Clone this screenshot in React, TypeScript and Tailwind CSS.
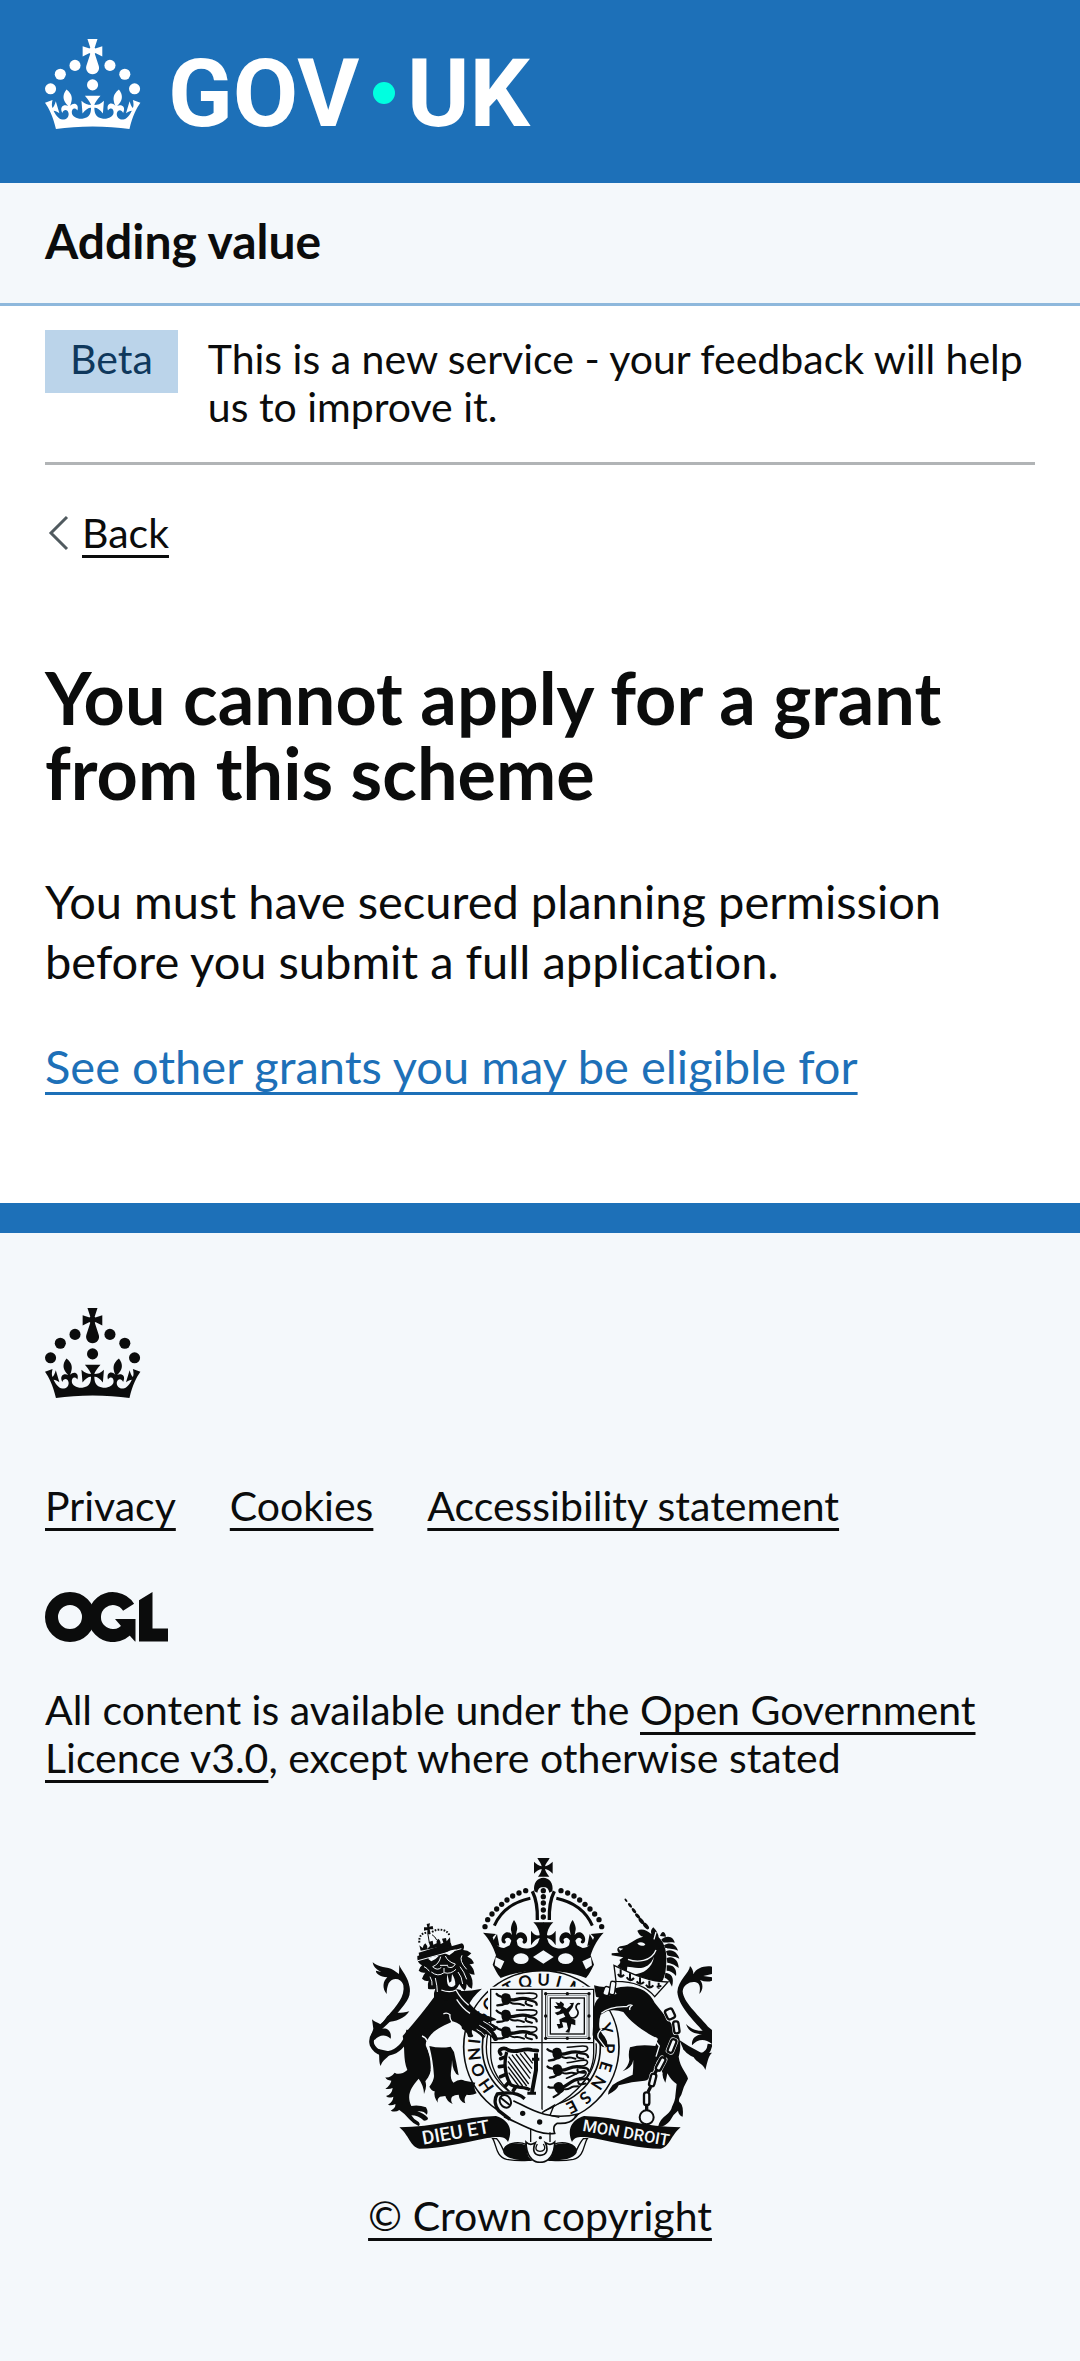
import type { ReactNode } from "react";

const INK = "#0b0c0c";
const PAPER = "#f4f8fb";

function CrownShapes() {
  return (
    <g>
      <circle cx="20" cy="17.6" r="3.7" />
      <circle cx="10.2" cy="23.5" r="3.7" />
      <circle cx="3.7" cy="33.2" r="3.7" />
      <circle cx="31.7" cy="30.6" r="3.7" />
      <circle cx="43.3" cy="17.6" r="3.7" />
      <circle cx="53.2" cy="23.5" r="3.7" />
      <circle cx="59.7" cy="33.2" r="3.7" />
      <path d="M33.1,9.8c.2-.1.3-.3.5-.5l4.6,2.4v-6.8l-4.6,1.5c-.1-.2-.3-.3-.5-.5l1.9-5.9h-6.7l1.9,5.9c-.2.1-.3.3-.5.5l-4.6-1.5v6.8l4.6-2.4c.1.2.3.3.5.5l-2.6,8c-.9,2.8,1.2,5.7,4.1,5.7h0c3,0,5.1-2.9,4.1-5.7l-2.6-8ZM37,37.9s-3.4,3.8-4.1,6.1c2.2,0,4.2-.5,6.4-2.8l-.7,8.5c-2-2.8-4.4-4.1-5.7-3.8.1,3.1.5,6.7,5.8,7.2,3.7.3,6.7-1.5,7-3.8.4-2.6-2-4.3-3.7-1.6-1.4-4.5,2.4-6.1,4.9-3.2-1.9-4.5-1.8-7.7,2.4-10.9,3,4,2.6,7.3-1.2,11.1,2.4-1.3,6.2,0,4,4.6-1.2-2.8-3.7-2.2-4.2.2-.3,1.7.7,3.7,3,4.2,1.9.3,4.7-.9,7-5.9-1.3,0-2.4.7-3.9,1.7l2.4-8c.6,2.3,1.4,3.7,2.2,4.5.6-1.6.5-2.8,0-5.3l5,1.8c-2.6,3.6-5.2,8.7-7.3,17.5-7.4-1.1-15.7-1.7-24.5-1.7h0c-8.8,0-17.1.6-24.5,1.7-2.1-8.9-4.7-13.9-7.3-17.5l5-1.8c-.5,2.5-.6,3.7,0,5.3.8-.8,1.6-2.3,2.2-4.5l2.4,8c-1.5-1-2.6-1.7-3.9-1.7,2.3,5,5.2,6.2,7,5.9,2.3-.4,3.3-2.4,3-4.2-.5-2.4-3-3.1-4.2-.2-2.2-4.6,1.6-6,4-4.6-3.7-3.7-4.2-7.1-1.2-11.1,4.2,3.2,4.3,6.4,2.4,10.9,2.5-2.8,6.3-1.3,4.9,3.2-1.8-2.7-4.1-1-3.7,1.6.3,2.3,3.3,4.1,7,3.8,5.4-.5,5.7-4.2,5.8-7.2-1.3-.2-3.7,1-5.7,3.8l-.7-8.5c2.2,2.3,4.2,2.7,6.4,2.8-.7-2.3-4.1-6.1-4.1-6.1h10.6,0Z" />
    </g>
  );
}

function GovUkLogo() {
  return (
    <svg viewBox="0 0 486 130" className="block h-[130px] w-[486px] max-w-full" role="img" aria-label="GOV.UK">
      <g fill="white" transform="scale(1.5)">
        <CrownShapes />
      </g>
      <g fill="white" fontFamily="Roboto, sans-serif" fontWeight="700" fontSize="95">
        <text x="123" y="87">GOV</text>
        <text x="362" y="87">UK</text>
      </g>
      <circle cx="339" cy="54" r="11" fill="#00ffe0" />
    </svg>
  );
}

function OglMark() {
  return (
    <svg viewBox="0 0 123 50" className="block h-[50px] w-[123px]" role="img" aria-label="Open Government Licence">
      <circle cx="25" cy="25" r="18.5" fill="none" stroke={INK} strokeWidth="13" />
      <path d="M83.6 15.2A18.5 18.5 0 1 0 82.5 36.5" fill="none" stroke={INK} strokeWidth="13" />
      <path d="M70 27H90.500V49.500H90L76 34Z" fill={INK} />
      <path d="M94 8.200L107.500 0V36.500H123V49.500H94Z" fill={INK} />
    </svg>
  );
}

const PEARLS = [
  [405, 260], [413, 239], [426, 222], [440, 207], [455, 193], [471, 180], [488, 168], [507, 159], [527, 152],
];

function ArmsCrownHalf() {
  return (
    <g>
      {PEARLS.map(([x, y]) => (
        <circle key={x} cx={x} cy={y} r="8" />
      ))}
      <path d="M433 257C452 214 490 186 541 175" fill="none" stroke={INK} strokeWidth="9" />
      <path d="M547 154C561 182 563 208 562 240" fill="none" stroke={INK} strokeWidth="10" />
      <path d="M399 278L438 282L428 292C434 312 446 324 462 324L479 316L484 302C478 292 470 290 464 300C470 304 468 312 460 310C450 304 454 284 466 278C476 274 484 280 486 286L484 274C480 264 486 250 492 240C500 250 504 264 500 274L498 286C502 278 512 274 522 280C534 288 534 304 526 310C520 314 514 306 520 300C514 290 506 292 500 302L503 316C518 330 548 330 564 308L569 294C560 295 552 302 543 316V272C552 284 560 288 569 286C568 270 560 256 550 247H581V392C530 392 490 398 452 414C440 400 436 388 428 374L438 346C430 320 416 296 399 278Z" />
      <path d="M424 312L441 282L448 318Z" />
      <path d="M437 352L463 364L452 388L434 376Z" fill={PAPER} />
      <ellipse cx="513" cy="356" rx="23" ry="16" fill={PAPER} />
    </g>
  );
}

function ArmsCrown() {
  return (
    <g fill={INK}>
      <path d="M562 54H599C594 64 586 72 585 79C592 78 602 71 608 65V101C602 94 592 88 585 87C586 94 592 102 598 110H564C570 102 575 94 575 87C568 88 558 94 552 101V65C558 71 568 78 575 79C574 72 568 64 562 54Z" />
      <path d="M553 154C548 128 564 113 580 113C596 113 612 128 607 154L598 158C594 142 588 142 580 142C572 142 566 142 562 158Z" />
      {[152, 170, 189, 210, 231].map((y) => (
        <circle key={y} cx="580" cy={y} r="8" />
      ))}
      <ArmsCrownHalf />
      <g transform="translate(1160 0) scale(-1 1)">
        <ArmsCrownHalf />
      </g>
      <path d="M580 331L611 351L580 371L549 351Z" fill={PAPER} />
    </g>
  );
}

function PassantLion({ x, y, tilt = 0 }: { x: number; y: number; tilt?: number }) {
  return (
    <g transform={`translate(${x} ${y}) rotate(${tilt})`} fill="none" stroke={INK} strokeLinecap="round">
      <path d="M18 6C28-3 44 2 44 14C48 28 40 38 28 36C16 34 14 20 18 6Z" fill={INK} stroke="none" />
      <path d="M2 4C8 12 14 10 20 14" strokeWidth="7" />
      <path d="M38 20C54 28 70 10 98 20" strokeWidth="10" />
      <path d="M98 18C116 22 128 12 120 4C108-2 84 4 62 2" strokeWidth="5" />
      <path d="M98 22C110 26 122 24 122 36" strokeWidth="7" />
      <path d="M30 32C20 38 12 38 4 38" strokeWidth="7" />
      <path d="M44 30C56 38 60 30 72 34L84 38" strokeWidth="6" />
      <path d="M90 26C84 36 100 38 108 40" strokeWidth="6" />
    </g>
  );
}

const MOTTO: [string, number][] = [
  ["H", -125], ["O", -110], ["N", -96], ["I", -85], ["S", -63], ["O", -50], ["T", -29], ["Q", -14],
  ["U", 2], ["I", 15], ["M", 31], ["Y", 74], ["P", 91], ["E", 107], ["N", 122], ["S", 139], ["E", 153],
];

function Shield() {
  return (
    <g>
      <ellipse cx="574" cy="621" rx="233" ry="229" fill={PAPER} stroke={INK} strokeWidth="5" />
      <g fill={INK} fontFamily="Lato, sans-serif" fontWeight="700" fontSize="50" textAnchor="middle">
        {MOTTO.map(([letter, angle]) => (
          <text key={angle} x="574" y="437" transform={`rotate(${angle} 574 621)`}>
            {letter}
          </text>
        ))}
      </g>
      <circle cx="574" cy="621" r="177" fill={PAPER} stroke={INK} strokeWidth="5" />
      <circle cx="574" cy="621" r="165" fill="none" stroke={INK} strokeWidth="4" />
      <path d="M414 440H741V610H414Z" fill={PAPER} />
      <path d="M422 448H731V640C731 720 654 784 576 816C500 784 422 720 422 640Z" fill={PAPER} stroke={INK} strokeWidth="4" />
      <path d="M576 448V812M422 608H731" stroke={INK} strokeWidth="4" />
      <PassantLion x={438} y={458} />
      <PassantLion x={438} y={508} />
      <PassantLion x={438} y={558} />
      <PassantLion x={590} y={624} tilt={-4} />
      <PassantLion x={590} y={676} tilt={-9} />
      <PassantLion x={592} y={738} tilt={-24} />
      <g fill="none" stroke={INK}>
        <rect x="587" y="461" width="130" height="134" strokeWidth="3" />
        <rect x="593" y="467" width="118" height="122" strokeWidth="2" stroke="#6b7073" />
        <rect x="601" y="474" width="102" height="108" strokeWidth="4" />
      </g>
      <g fill={INK}>
        {[[587, 461], [717, 461], [587, 595], [717, 595], [652, 461], [652, 595], [587, 528], [717, 528]].map(([x, y]) => (
          <circle key={`${x}-${y}`} cx={x} cy={y} r="5" />
        ))}
        <path d="M616 486L628 490L632 484L642 492L640 500L650 506L664 494L658 490L672 488L668 502L656 518L664 534L676 540V556L664 552L658 578L646 576L654 566L650 548L636 546L640 562L626 566L620 552L630 552L628 538L646 530L640 520L622 526L614 518L628 514L634 506L618 506L612 498L624 498Z" />
        <path d="M660 532C680 540 690 520 680 508C674 496 684 488 690 492" fill="none" stroke={INK} strokeWidth="5" />
      </g>
      <g fill="none" stroke={INK}>
        <path d="M452 642C440 628 462 620 474 630C500 642 520 622 546 630L562 632" strokeWidth="11" strokeLinecap="round" />
        <path d="M470 636C460 670 466 710 482 734C500 746 526 738 540 750" strokeWidth="10" />
        <path d="M462 652L452 656M462 678L448 680M466 704L452 710M476 728L466 738M496 742L490 752" strokeWidth="11" strokeLinecap="round" />
        <path d="M558 640V690L546 756" strokeWidth="12" />
        <path d="M546 658H568M532 760H558" strokeWidth="9" />
        <path d="M476 650L536 732M486 644L540 716M498 642L542 700M510 640L546 686M522 636L548 670M474 664L530 738M474 680L518 738M476 698L506 738" strokeWidth="4" />
      </g>
    </g>
  );
}

function Lion() {
  return (
    <g fill={INK}>
      <path d="M176 570C166 640 90 664 66 614C56 578 98 562 120 534C160 488 188 466 164 424" fill="none" stroke={INK} strokeWidth="14" />
      <path d="M68 367C86 384 112 380 130 390L147 402L148 374C152 392 178 410 179 448C176 480 150 500 130 528L112 530C140 496 166 470 160 434C152 412 126 412 116 430C112 440 110 450 110 462C96 446 98 424 112 412C90 410 76 400 78 392L94 396C78 388 70 380 68 367Z" />
      <path d="M112 528C134 514 152 522 178 514C164 536 136 546 110 546L84 568Z" />
      <path d="M66 538C80 552 98 548 96 566C112 562 126 574 122 596C106 582 88 584 74 600L62 592L70 566Z" />
      <path d="M82 626C92 646 84 660 92 678C96 660 116 652 126 636Z" />
      <path d="M318 452Q350 456 396 446Q366 470 350 506Z" />
      <path d="M252 472Q214 524 158 588C166 620 158 656 172 690Q150 708 134 698Q122 714 106 712Q110 722 124 722Q120 738 106 746Q118 748 128 744Q126 764 108 768Q116 776 130 770Q130 784 114 794Q124 798 136 792Q138 804 122 812Q136 818 148 810Q166 822 178 838Q190 852 206 858Q212 854 206 846Q192 840 184 826Q204 826 222 842Q234 842 234 834Q222 820 202 814Q222 812 230 824Q236 816 228 802Q206 794 184 798C168 764 184 742 206 716Q222 738 222 762Q232 740 226 724C246 700 246 676 240 650L228 610C240 572 278 560 308 544Q336 552 336 566Q352 574 354 590Q366 594 370 588Q364 580 366 570Q386 578 400 596Q408 592 406 582Q424 586 432 602Q444 606 444 596Q440 584 430 574Q440 572 442 562Q432 550 414 548Q428 540 440 540C428 528 408 530 392 520C366 504 350 480 332 450L290 440Z" />
      <path d="M400 544Q416 552 430 564M388 556Q410 566 424 584M380 568Q396 576 404 586" fill="none" stroke={PAPER} strokeWidth="3" />
      <path d="M238 618Q270 626 302 620L312 636Q320 670 326 706Q308 700 306 660C306 690 296 712 310 728Q330 714 344 722L376 728Q368 740 380 760Q364 768 350 764Q340 776 346 790Q328 784 326 764Q314 764 306 770Q300 780 308 792Q290 784 286 768L270 770Q260 776 264 788Q250 772 254 754Q244 752 238 740Q252 722 252 708C250 676 246 650 238 618Z" />
      <path d="M216 588Q228 592 232 604Q228 612 230 618Q246 650 244 690M280 522Q290 516 300 524Q298 536 306 546M320 478Q338 506 360 520" fill="none" stroke={PAPER} strokeWidth="4" />
      <path d="M202 348L336 310Q346 316 340 330Q352 330 364 340Q356 348 352 350Q366 354 372 370Q362 374 358 372Q372 384 374 404Q362 404 358 400Q372 418 366 446Q354 442 350 432Q350 446 344 452Q334 444 328 432Q320 450 306 456Q300 472 290 482Q276 478 270 464Q260 474 252 474Q250 458 256 446Q244 450 234 446Q232 432 236 422Q226 426 216 416Q220 404 226 398Q214 400 206 392Q210 380 216 376Q200 368 202 348Z" />
      <path d="M234 356Q250 346 266 348Q258 358 244 364ZM284 340Q300 330 318 328Q312 338 298 346Z" fill={PAPER} />
      <path d="M204 362L334 326M272 350Q268 372 248 380Q262 394 274 382M286 348Q294 366 316 372Q308 388 292 380M270 376H294M282 384V396M244 396Q264 412 282 398Q302 404 318 388M222 380Q232 384 238 394M240 410Q248 424 246 436M256 414Q262 440 262 456M336 346Q326 362 350 388M330 380Q342 394 350 418M324 396Q336 410 338 432" fill="none" stroke={PAPER} strokeWidth="3" />
      <path d="M292 402Q288 428 296 438Q308 446 316 434Q316 416 306 402L304 424L298 428Z" fill={PAPER} />
      <path d="M274 450Q300 460 318 450Q332 476 356 496" fill="none" stroke={PAPER} strokeWidth="4" />
      <path d="M206 338L302 308L306 320L208 350Z" />
      <path d="M230 252L240 250L238 260L248 258L250 268L239 268L242 282L232 284L232 270L222 272L222 262L232 262Z" />
      <path d="M212 332L208 316L218 324Q220 314 226 310Q234 318 232 326L240 318L236 306L248 302L250 314L260 310Q258 302 264 296Q272 300 272 312L280 308L276 296L288 294L290 304L300 292L302 314Z" />
      <path d="M208 308C206 288 216 278 232 278M246 276C266 262 296 270 298 288" fill="none" stroke={INK} strokeWidth="6" strokeDasharray="5 4" />
      <path d="M234 284L238 308M246 284Q256 290 260 300" fill="none" stroke={INK} strokeWidth="3" />
    </g>
  );
}

const HORN: [number, number, number][] = [[828, 181, 6], [840, 196, 8], [852, 212, 9], [863, 228, 10], [874, 243, 11], [888, 258, 12]];

const MANE = [
  "M930 288C936 268 946 276 948 290Z",
  "M934 298C956 282 972 294 974 308C958 304 946 310 938 306Z",
  "M942 316C962 302 980 316 984 332C966 324 954 328 946 324Z",
  "M948 334C966 324 984 340 988 356C970 348 960 350 952 346Z",
  "M950 354C972 346 986 364 986 384C972 372 962 370 952 368Z",
  "M950 376C970 372 982 388 978 408C968 396 960 392 950 392Z",
  "M946 398C964 400 974 412 966 440C958 424 954 416 944 414Z",
];

const CHAIN: [number, number, number, number, number][] = [
  [960, 522, 28, 34, -25], [979, 562, 20, 40, -8], [966, 618, 20, 46, 22], [932, 672, 20, 46, 28], [908, 720, 20, 42, 14], [890, 776, 20, 42, 0],
];

function Unicorn() {
  return (
    <g fill={INK}>
      {HORN.map(([x, y, r]) => (
        <ellipse key={x} cx={x} cy={y} rx={r} ry={r / 2} transform={`rotate(50 ${x} ${y})`} />
      ))}
      {MANE.map((d) => (
        <path key={d} d={d} />
      ))}
      <path d="M862 272C874 264 890 270 904 282Q900 270 910 262Q924 276 926 292C946 310 952 340 948 380C946 410 936 432 920 440L850 404C880 400 906 386 912 350C900 380 880 388 846 382L832 380L830 396L802 378Q816 368 808 360L820 352L785 346V340L806 338C798 330 802 318 816 318C840 316 850 296 880 290Q868 288 862 272Z" />
      <path d="M862 310C872 304 884 308 886 314C878 320 866 318 862 310ZM806 324L820 326L810 332Z" fill={PAPER} />
      <path d="M834 358C860 368 904 366 918 330M912 298L918 276" fill="none" stroke={PAPER} strokeWidth="4" />
      <path d="M1080 612C1076 656 1030 656 1004 622" fill="none" stroke={INK} strokeWidth="14" />
      <path d="M1086 638C1074 650 1072 668 1066 690C1060 670 1040 668 1030 650L1000 628L988 600L1016 618L1056 640Z" />
      <path d="M1086 380C1064 376 1040 384 1030 402Q1030 388 1020 378C1018 400 984 420 982 456C986 500 1030 540 1058 572C1040 574 1022 566 1008 552C1016 576 1034 582 1056 582C1036 586 1024 596 1026 616C1044 596 1064 594 1086 612V570L1074 560C1040 520 1000 486 998 454C1000 430 1030 420 1044 430C1052 438 1050 450 1048 462C1062 448 1058 428 1050 420Q1070 428 1086 422V412L1060 408L1086 402Z" />
      <path d="M732 436Q764 446 796 436L770 480L738 470Z" />
      <path d="M790 446C850 428 896 448 914 488L962 548C992 580 996 616 986 650C990 684 1012 700 1014 716Q1000 740 994 764Q984 778 988 786Q1002 794 998 830Q986 826 984 812Q968 824 960 842Q944 862 924 860Q930 838 948 826Q964 812 966 800Q976 780 976 768L980 732Q964 722 952 700Q950 712 946 728Q936 712 938 700L922 660L906 704Q896 720 884 722Q846 724 806 736Q800 752 774 764Q774 752 780 746Q788 732 802 726L848 704Q850 686 850 660Q846 684 818 694Q836 678 838 660Q834 640 840 622Q870 612 916 618L924 596C890 580 846 552 820 516Q792 506 770 514L752 524Q746 540 748 562Q752 578 764 590Q774 604 772 620Q758 628 740 604Q726 592 728 580L732 500Q738 476 752 470L800 462Z" />
      <path d="M754 520Q780 498 830 500Q838 492 846 496Q836 504 840 510M918 592Q914 604 928 618L918 650M756 566Q736 584 748 598L766 622" fill="none" stroke={PAPER} strokeWidth="4" />
      <path d="M792 376L798 424C850 424 890 440 914 470L954 426C900 426 850 404 792 376Z" fill={PAPER} stroke={INK} strokeWidth="4" />
      <path d="M812 388V412M804 402Q812 418 822 404M840 400V420M830 412Q840 428 852 414M870 412V432M860 424Q870 438 882 426M898 422V442M888 434Q898 450 910 436M926 428V446M920 440L934 438" fill="none" stroke={INK} strokeWidth="6" />
      <g fill={PAPER} stroke={INK} strokeWidth="4">
        <rect x="762" y="440" width="18" height="26" rx="6" transform="rotate(20 770 450)" />
        <rect x="780" y="424" width="16" height="40" rx="6" transform="rotate(8 788 442)" />
      </g>
      {CHAIN.map(([x, y, w, h, angle]) => (
        <g key={y} transform={`rotate(${angle} ${x} ${y})`}>
          <rect x={x - w / 2 - 3} y={y - h / 2 - 3} width={w + 6} height={h + 6} rx="10" fill={PAPER} />
          <rect x={x - w / 2 + 2} y={y - h / 2 + 2} width={w - 4} height={h - 4} rx="7" fill={PAPER} stroke={INK} strokeWidth="7" />
        </g>
      ))}
      <path d="M920 690L914 702M902 740L894 756M890 796V812M952 640L944 652" stroke={INK} strokeWidth="10" />
      <circle cx="890" cy="832" r="21" fill={PAPER} stroke={INK} strokeWidth="6" />
    </g>
  );
}

function ScrollHalf() {
  return (
    <g fill={INK}>
      <path d="M148 862C250 862 340 830 438 828C476 840 490 868 474 906C466 886 440 890 412 894C330 910 270 926 208 926C182 922 176 884 148 862Z" />
      <path d="M428 896C440 912 436 950 470 958C500 964 520 962 542 961C530 950 526 930 530 914C500 900 460 914 462 934C456 922 450 906 440 896Z" fill={PAPER} stroke={INK} strokeWidth="4" />
      <path d="M542 961C530 950 526 930 528 916C500 902 456 912 460 938C470 958 510 962 542 961Z" />
    </g>
  );
}

function Garter() {
  return (
    <g>
      <ScrollHalf />
      <g transform="translate(1140 0) scale(-1 1)">
        <ScrollHalf />
      </g>
      <path d="M478 850L656 856L640 904H500Z" fill={PAPER} />
      <g fill={PAPER} fontFamily="Roboto, sans-serif" fontWeight="500">
        <text x="220" y="914" fontSize="57" transform="rotate(-10 220 914)">DIEU ET</text>
        <text x="696" y="872" fontSize="49" transform="rotate(10 696 872)">MON DROIT</text>
      </g>
      <path d="M542 866V906M600 866V906" stroke={INK} strokeWidth="4" />
      <path d="M528 906C540 918 548 912 556 908C546 930 552 946 570 946C590 946 596 930 586 908C594 912 602 918 614 906C614 944 596 967 570 967C546 967 528 944 528 906Z" fill={PAPER} stroke={INK} strokeWidth="5" />
      <path d="M562 912C552 930 562 934 570 934C580 934 590 928 580 912" fill="none" stroke={INK} strokeWidth="4" />
      <circle cx="571" cy="893" r="5" fill={INK} />
      <path d="M436 764C470 748 504 752 528 778C570 812 620 836 676 822C668 846 646 852 620 850L612 876C560 882 510 846 470 836C440 822 430 790 436 764Z" fill={PAPER} />
      <path d="M524 776C500 754 470 756 442 762C430 780 436 800 446 812L480 838" fill="none" stroke={INK} strokeWidth="10" />
      <path d="M490 782C530 800 590 846 684 822C668 846 650 852 622 850Q606 858 614 880C570 888 520 856 462 830" fill="none" stroke={INK} strokeWidth="5" />
      <ellipse cx="466" cy="784" rx="16" ry="20" transform="rotate(-30 466 784)" fill={PAPER} stroke={INK} strokeWidth="6" />
      <path d="M450 772L480 796" stroke={INK} strokeWidth="6" />
      <circle cx="518" cy="820" r="8" fill={INK} />
      <circle cx="569" cy="846" r="8" fill={INK} />
      <path d="M576 818L612 796L600 826L628 832" fill="none" stroke={INK} strokeWidth="4" />
    </g>
  );
}

function RoyalArms() {
  return (
    <svg viewBox="54 54 1032 915" className="block h-auto w-[344px]" aria-hidden="true">
      <Shield />
      <ArmsCrown />
      <Lion />
      <Unicorn />
      <Garter />
    </svg>
  );
}

function InkLink({ children, href = "#" }: { children: ReactNode; href?: string }) {
  return (
    <a
      href={href}
      className="underline decoration-[3px] underline-offset-[7px] [text-decoration-skip-ink:none]"
    >
      {children}
    </a>
  );
}

export default function App() {
  return (
    <div className="bg-[#f4f8fb] font-['Lato','Roboto',sans-serif] text-[41px] leading-[48px] text-[#0b0c0c] [font-variant-ligatures:none]">
      <header>
        <div className="bg-[#1d70b8] px-[45px] pt-[39px] pb-[14px]">
          <a href="#" className="block">
            <GovUkLogo />
          </a>
        </div>
        <div className="border-b-[3px] border-[#8eb8dc] px-[45px] pt-7 pb-8">
          <a href="#" className="block text-[48px] leading-[60px] font-bold">
            Adding value
          </a>
        </div>
      </header>

      <div className="bg-white px-[45px] pb-[107px]">
        <div className="flex items-start gap-[30px] border-b-[3px] border-[#b1b4b6] pt-6 pb-[31px]">
          <strong className="shrink-0 bg-[#bbd4ea] px-[25px] pt-[5px] pb-[10px] font-normal text-[#0f385c]">Beta</strong>
          <p className="pt-[5px]">This is a new service - your feedback will help us to improve it.</p>
        </div>

        <div className="mt-11 flex items-center gap-[13px]">
          <svg viewBox="0 0 24 36" className="h-9 w-6" fill="none" stroke="#505a5f" strokeWidth="3" aria-hidden="true">
            <path d="M22 2L6 18L22 34" />
          </svg>
          <InkLink>Back</InkLink>
        </div>

        <main className="mt-[103px]">
          <h1 className="text-[72px] leading-[75px] font-bold">You cannot apply for a grant from this scheme</h1>
          <p className="mt-[61px] text-[47px] leading-[60px]">
            You must have secured planning permission before you submit a full application.
          </p>
          <p className="mt-[45px] text-[47px] leading-[60px]">
            <a
              href="#"
              className="text-[#1d70b8] underline decoration-[3px] underline-offset-8 [text-decoration-skip-ink:none]"
            >
              See other grants you may be eligible for
            </a>
          </p>
        </main>
      </div>

      <footer className="border-t-[30px] border-[#1d70b8] px-[45px] pt-[75px] pb-[121px]">
        <svg viewBox="0 0 64 60" className="block h-[90px] w-24" fill={INK} aria-hidden="true">
          <CrownShapes />
        </svg>
        <ul className="mt-[84px] flex flex-wrap gap-x-[54px]">
          <li><InkLink>Privacy</InkLink></li>
          <li><InkLink>Cookies</InkLink></li>
          <li><InkLink>Accessibility statement</InkLink></li>
        </ul>
        <div className="mt-[62px]">
          <OglMark />
        </div>
        <p className="mt-11">
          All content is available under the <InkLink>Open Government Licence v3.0</InkLink>, except where otherwise
          stated
        </p>
        <div className="mt-[76px] flex flex-col items-center gap-[29px]">
          <RoyalArms />
          <InkLink>© Crown copyright</InkLink>
        </div>
      </footer>
    </div>
  );
}
